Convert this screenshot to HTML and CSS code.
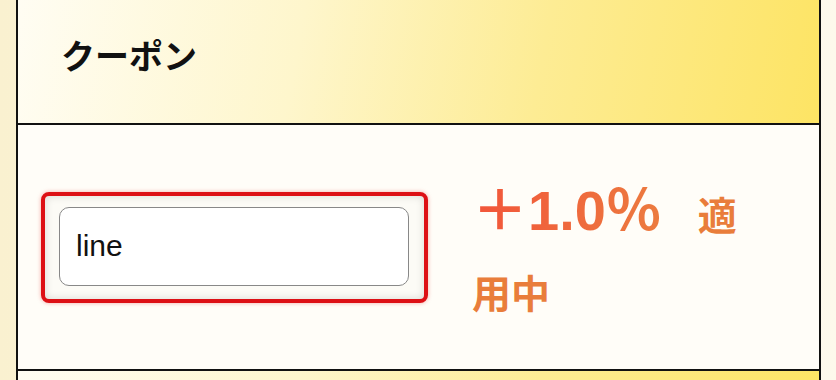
FILE: index.html
```html
<!DOCTYPE html>
<html lang="ja">
<head>
  <meta charset="UTF-8">
  <meta name="viewport" content="width=device-width, initial-scale=1.0">
  <link rel="stylesheet" href="styles.css">
  <title>クーポン</title>
</head>
<body>
  <div class="coupon-table">
    <div class="coupon-head">
      <h2>クーポン</h2>
    </div>
    <div class="coupon-body">
      <div class="code-box">
        <input type="text" class="code-input" value="line">
      </div>
      <p class="coupon-status"><span class="rate">＋1.0％</span>適用中</p>
    </div>
    <div class="coupon-head next"></div>
  </div>
</body>
</html>
```

FILE: styles.css
```css
body {
  margin: 0;
  height: 380px;
  overflow: hidden;
  font-family: "Noto Sans CJK JP", "Liberation Sans", sans-serif;
  background: linear-gradient(90deg, #faf1d0 0%, #fdf9ec 100%);
}

.coupon-table {
  width: 801px;
  margin-left: 16px;
  border-left: 2px solid #111;
  border-right: 2px solid #111;
}

.coupon-head {
  height: 123px;
  display: flex;
  align-items: center;
  padding-left: 43px;
  border-bottom: 2px solid #111;
  background: linear-gradient(100deg, #fffdf3 0%, #fef6cc 35%, #fdec94 65%, #fde464 100%);
}

.coupon-head h2 {
  margin: 0 0 14px;
  font-size: 34px;
  font-weight: 700;
  color: #111;
}

.coupon-head.next {
  height: 40px;
  border-bottom: none;
}

.coupon-body {
  height: 244px;
  display: flex;
  align-items: center;
  padding-left: 23px;
  border-bottom: 2px solid #111;
  background: #fffdf8;
}

.code-box {
  padding: 11px 15px 13px 14px;
  border: 4px solid #dd1015;
  border-radius: 8px;
  box-shadow: 0 0 4px rgba(220, 20, 20, 0.35), inset 0 0 8px rgba(0, 0, 0, 0.14);
  background: #fcfbf6;
}

.code-input {
  display: block;
  box-sizing: border-box;
  width: 350px;
  height: 79px;
  padding: 0 16px;
  border: 1.5px solid #888;
  border-radius: 10px;
  background: #fff;
  font-family: "Liberation Sans", sans-serif;
  font-size: 30px;
  color: #111;
  outline: none;
}

.coupon-status {
  width: 290px;
  margin: -18px 0 0 44px;
  font-size: 39px;
  font-weight: 700;
  line-height: 1.4;
  color: #e97d3b;
}

.rate {
  margin-right: 36px;
  font-family: "Liberation Sans", "Noto Sans CJK JP", sans-serif;
  font-size: 56px;
  line-height: 106px;
  background: linear-gradient(90deg, #f2553a, #ec7b3f);
  -webkit-background-clip: text;
  background-clip: text;
  color: transparent;
}
```
